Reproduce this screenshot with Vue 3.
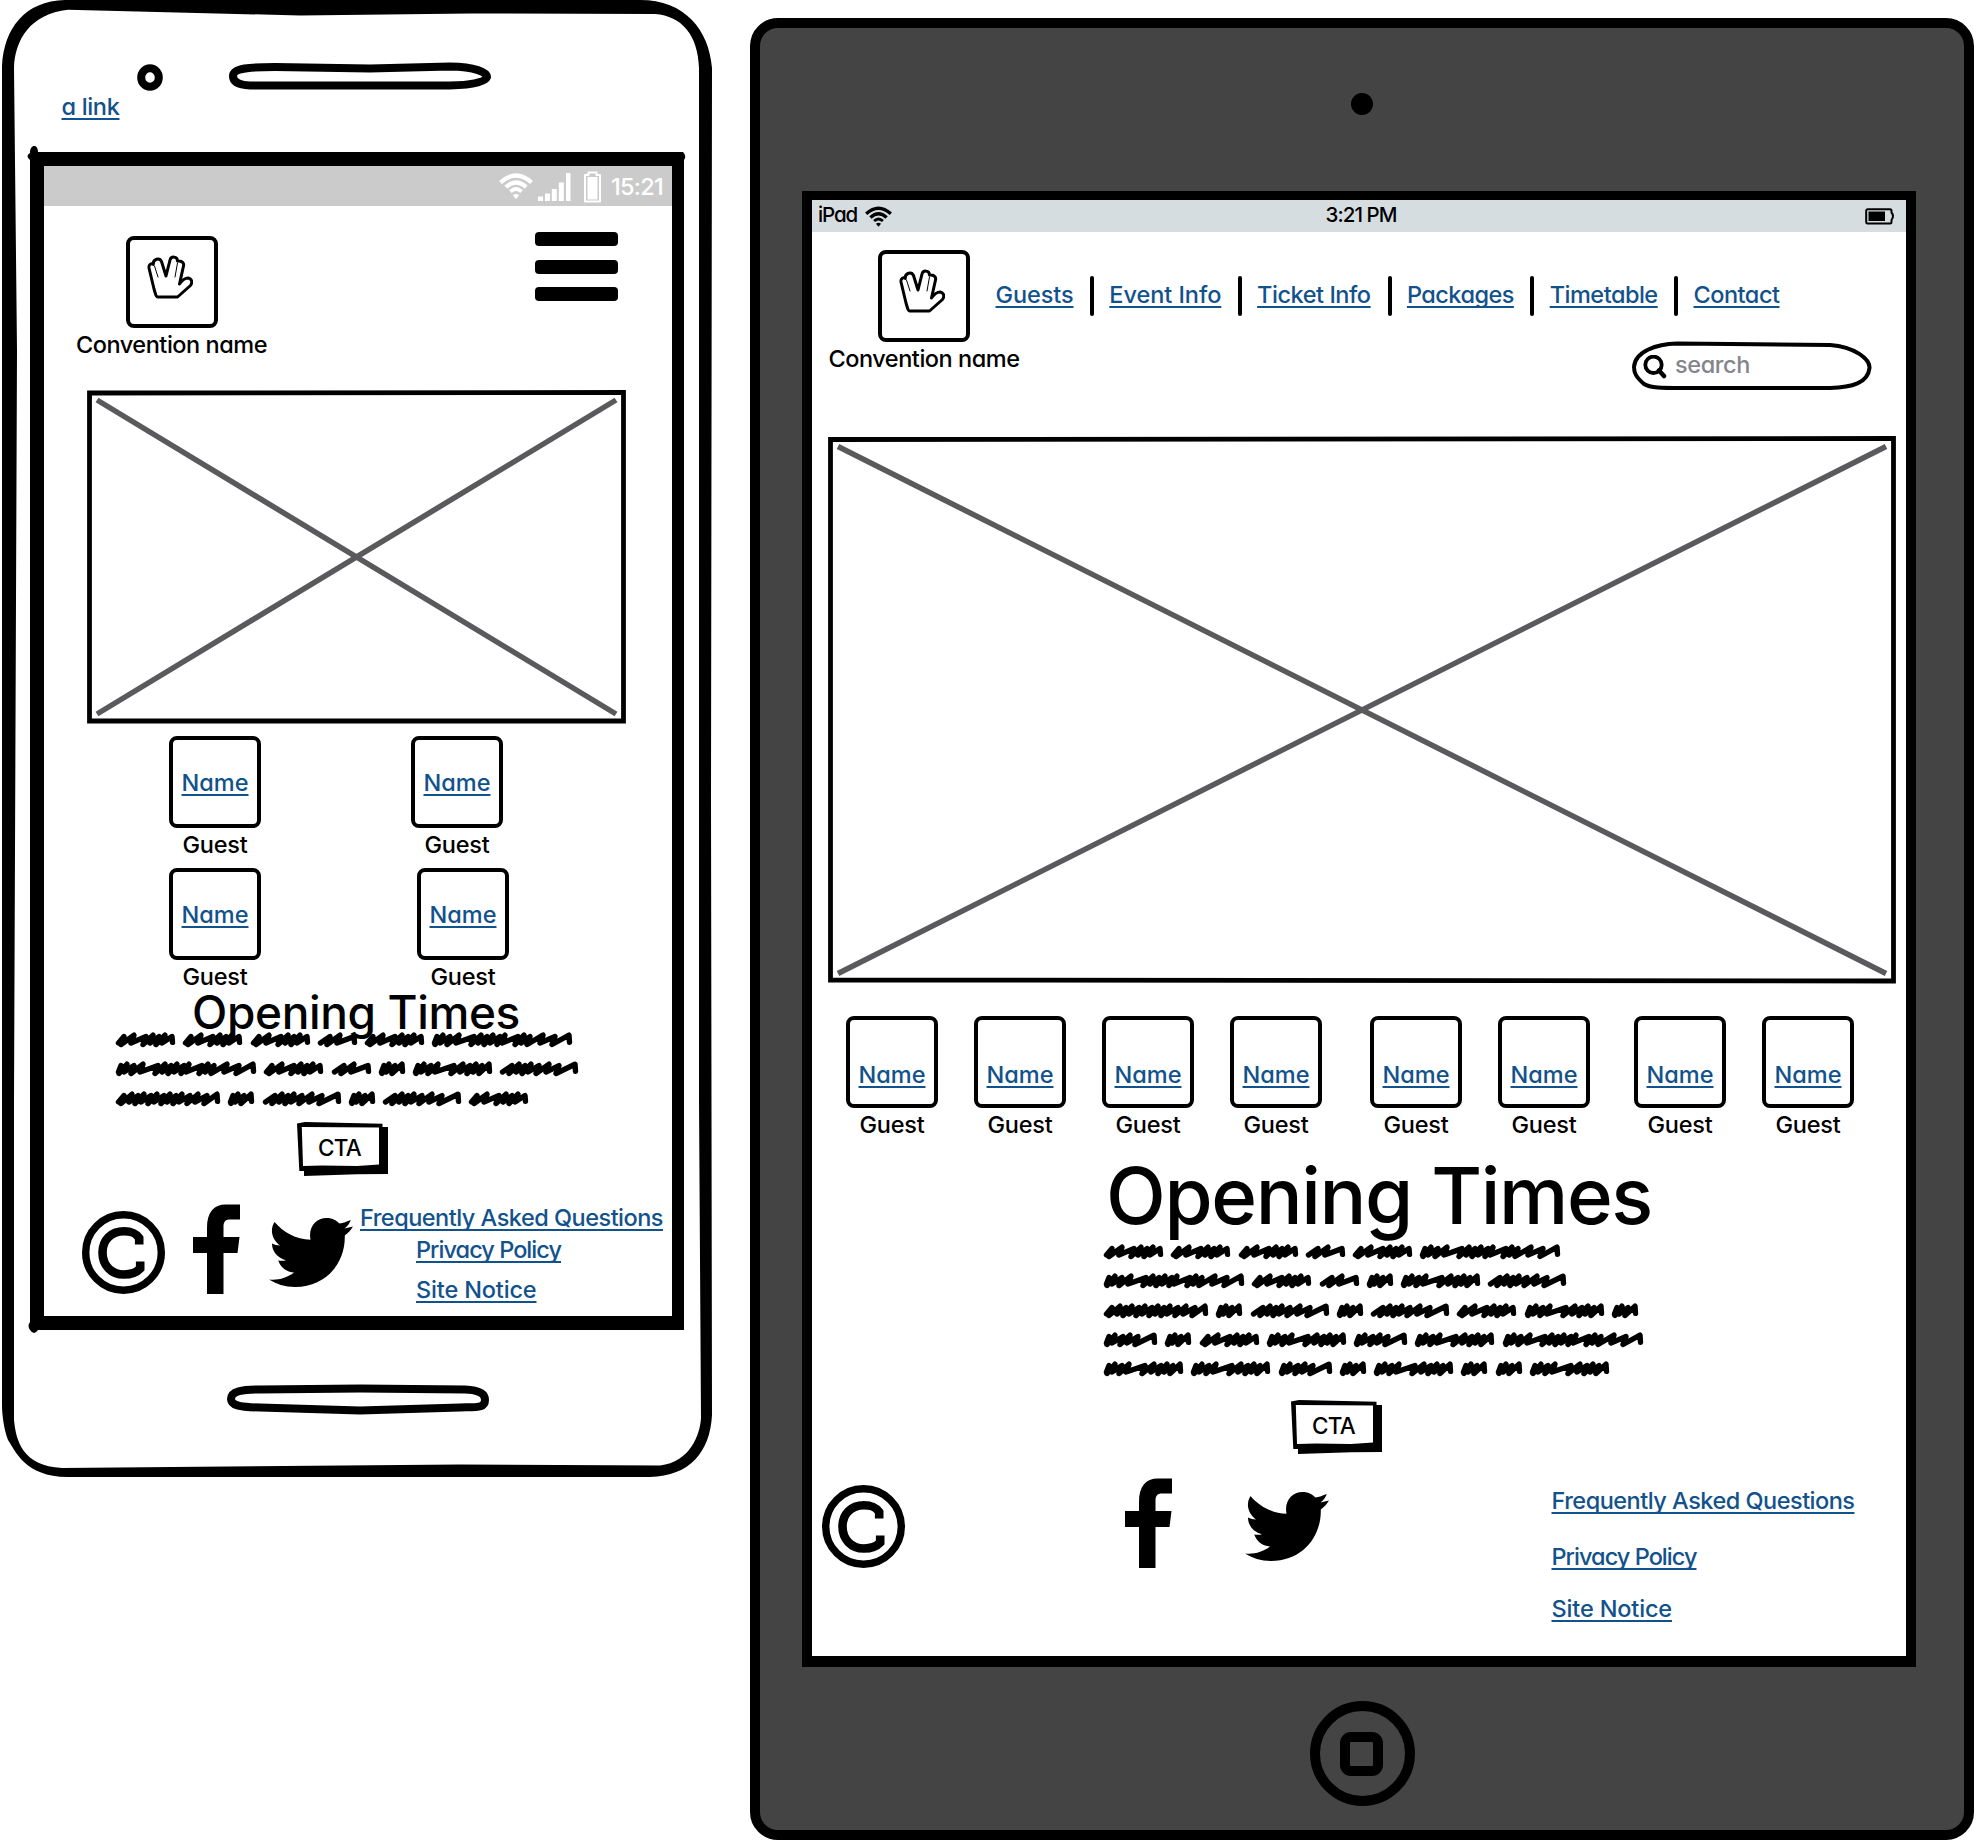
<script setup>
import { h } from 'vue'

// Spreads the letters of a label so that it fills the given width.
const vFit = {
  mounted(el, { value }) {
    const range = document.createRange()
    range.selectNodeContents(el)
    const natural = range.getBoundingClientRect().width
    el.style.letterSpacing = (value - natural) / el.textContent.length + 'px'
  },
}

// Scribbled filler words: width and the x position of every peak.
const words = {
  A: { w: 59, t: [10, 20, 32, 39, 45, 51, 58] },
  B: { w: 39, t: [14, 24, 38] },
  C: { w: 140, t: [7, 13, 20, 29, 44, 51, 57, 63, 70, 75, 88, 94, 100, 113, 125, 139] },
  D: { w: 26, t: [7, 12, 18, 25] },
  E: { w: 79, t: [7, 13, 20, 27, 43, 52, 59, 65, 71, 78] },
  F: { w: 78, t: [14, 21, 27, 33, 41, 51, 61, 77] },
  G: { w: 104, t: [10, 18, 24, 30, 37, 43, 50, 56, 62, 68, 76, 84, 93, 103] },
  H: { w: 53, t: [7, 13, 21, 28, 36, 52] },
}
function scribble(t) {
  let d = `M2.5 11`
  t.forEach((x, i) => {
    const top = i % 2 ? 3.2 : 4.6
    const next = t[i + 1]
    d += ` L${x - 2} ${top}`
    if (next) d += ` L${Math.max(3, x - 5)} ${i % 2 ? 11 : 12.5}`
    else d += ` L${x - 1.5} 10.4`
  })
  return d
}
const Scribbles = (props) =>
  props.rows.map((row) =>
    h('div', { class: 'scribble-row' }, [...row].map((k) =>
      h('svg', { width: words[k].w, height: 16, viewBox: `0 0 ${words[k].w} 16` }, [
        h('path', { d: scribble(words[k].t), fill: 'none', stroke: '#000', 'stroke-width': 5.4, 'stroke-linecap': 'round', 'stroke-linejoin': 'round' }),
      ])
    ))
  )
Scribbles.props = ['rows']

const Wifi = () =>
  h('svg', { viewBox: '0 0 34 26' }, [
    h('g', { fill: 'none', stroke: 'currentColor', 'stroke-width': 4.3 }, [
      h('path', { d: 'M1.5 9.5Q17-4.5 32.5 9.5' }),
      h('path', { d: 'M6.8 14.2Q17 4.8 27.2 14.2' }),
      h('path', { d: 'M11.4 18.6Q17 13.4 22.6 18.6', 'stroke-width': 3.6 }),
    ]),
    h('path', { d: 'M13.8 22.2Q17 19.6 20.2 22.2L17 26Z', fill: 'currentColor' }),
  ])

const Hand = () =>
  h('svg', { width: 46, height: 44, viewBox: '0 0 46 44', fill: 'none', stroke: '#000', 'stroke-linejoin': 'round', 'stroke-linecap': 'round' }, [
    h('path', { 'stroke-width': 3, d: 'M8.5 39L7 34 2 13C1.5 9 4.5 8 6.2 9.5C6 4 12.5 2 14.5 6.5L19 21 23 5C24 1 30.5 1 30.5 6C34 5.500 37.500 7.500 36.500 11L32.500 29C35 25.500 38 23 41 23C44.500 23.500 46 27 43.500 30.500L30.500 42H11C9.500 42 9 41 8.500 39Z' }),
    h('path', { 'stroke-width': 1, d: 'M7.500 11L11 22M30.500 8L28 22' }),
  ])

const CopyrightIcon = () =>
  h('svg', { width: 83, height: 83, viewBox: '0 0 83 83', fill: 'none', stroke: '#000' }, [
    h('circle', { cx: 41.5, cy: 41.5, r: 37.8, 'stroke-width': 7.4 }),
    h('path', { 'stroke-width': 8.6, d: 'M57.200 33.500V27C53 21 48 20.200 42 20.200C29 20.200 20.500 29 20.500 41.500S29 63.500 42 63.500C49 63.500 54 62 58.200 57.500V50.500' }),
  ])
const FacebookIcon = () =>
  h('svg', { width: 47, height: 90, viewBox: '0 0 47 90' }, [
    h('path', { d: 'M14 90V49H0V33H14V24C14 8 21 0 34 0.500H47V15.500H37C32 15.500 30.500 18 30.500 23V33H46.500L44.500 49H30.500V90Z' }),
  ])
const TwitterIcon = () =>
  h('svg', { width: 84, height: 69, viewBox: '0 0 84 69' }, [
    h('path', { d: 'M5.500 4C14 14 27 21.500 41.500 21.800C39 9 47 0 57.500 0C64 0 67.500 2.500 70.500 5.500C74 5 78 3.500 81.800 2C80.500 5.500 78.500 8.500 75.500 10.500L84 8.500C82 12 79 15 75.800 17.500C76.500 44 58 69 26 69C16 69 7 66 0 61.500C9 62.500 18 60 25 54.500C17 54 11.500 49 9.200 42.500C12 43 14.500 43 17 42.300C8.500 40 3 33.500 3 25.500C5.300 26.700 8 27.500 11 27.500C3 21.500 0.500 12 5.500 4Z' }),
  ])
const Cta = () =>
  h('div', { class: 'cta' }, [
    h('svg', { width: 92, height: 55, viewBox: '0 0 92 55' }, [
      h('path', { d: 'M0 1.500L8 0 85.500 1.800V5H91V52L60 52.300 7 54V49H2.300Z' }),
      h('path', { d: 'M4.800 5L82 5.500 82 42.500 60 44 25 43.500 6 44Z', fill: '#fff' }),
    ]),
    h('span', 'CTA'),
  ])

const nav = [
  ['Guests', 78, 16.5], ['Event Info', 112, 16.5], ['Ticket Info', 113.500, 17],
  ['Packages', 107, 16.500], ['Timetable', 108, 16.500], ['Contact', 86, 0],
]
const tabletGuests = [0, 36, 36, 36, 48, 36, 44, 36]
</script>

<template>
  <main class="board">
    <section class="phone">
      <svg class="shell" width="716" height="1480" viewBox="0 0 716 1480">
        <path fill-rule="evenodd" d="M2 66C4 28 25 1 65 0H640C685 0 709 30 712 68L711 800 712 1415C710 1452 690 1476 650 1477H70C25 1478 15 1450 8 1440C4 1430 2 1415 2 1405ZM14 68L17 350 14 1100 14 1420C16 1440 22 1466 62 1468L460 1464.500 660 1465.500C690 1462 700 1435 701 1418L699 1100V68C698 35 682 16 655 14L470 13.500 300 15.500 68 9.800C30 14 15 40 14 68Z" />
        <path d="M30 153C30 144 38 144 38 152H683Q687 156 684 160V1330H38Q34 1336 30 1330Q27 1326 30 1322V160Q25 156 30 153ZM44 166V1316H672V166Z" fill-rule="evenodd" />
        <ellipse cx="150" cy="77.500" rx="8.800" ry="9.300" fill="none" stroke="#000" stroke-width="8" />
        <path d="M233 76C233 68 250 67 275 67L370 68.500 450 66.500C475 67 487 72 487 77C485 83 468 85 450 85.500H250C238 85 233 82 233 76Z" fill="none" stroke="#000" stroke-width="8" />
        <path d="M231 1399C231 1391 242 1389.500 260 1389.500L360 1388.500 465 1389.500C480 1390 485 1394 485 1400C485 1408 478 1407 460 1407.500L360 1410.500 260 1407.500C238 1407 231 1405 231 1399Z" fill="none" stroke="#000" stroke-width="8" />
      </svg>

      <div class="phone-top"><a v-fit="58" class="link">a link</a></div>

      <div class="phone-screen">
        <div class="phone-status">
          <Wifi class="wifi" />
          <svg class="bars" width="33" height="28" viewBox="0 0 33 28" fill="#fff">
            <path d="M0 23.500h5V28H0zM7 20.500h5V28H7zM13.800 16h5v12h-5zM20.800 9.500h5V28h-5zM28 0h4.500v28H28z" />
          </svg>
          <svg class="battery" width="17" height="32" viewBox="0 0 17 32">
            <path d="M1 4h3.500V1.500h8V4H16v26.500H1z" fill="none" stroke="#fff" stroke-width="2" stroke-linejoin="round" />
            <path d="M3.500 6h10v22.500h-10z" fill="#fff" />
          </svg>
          <span v-fit="52">15:21</span>
        </div>

        <header class="phone-header">
          <div class="logo">
            <div class="box"><Hand class="hand" /></div>
            <span v-fit="191">Convention name</span>
          </div>
          <div class="burger"><i /><i /><i /></div>
        </header>

        <svg class="hero-small" width="539" height="334" viewBox="0 0 539 334" fill="none">
          <path d="M10 10L529 324M529 10L10 324" stroke="#5a5a5c" stroke-width="5.500" />
          <path d="M2.500 3L536.500 2.500V331L2.500 331Z" stroke="#000" stroke-width="4.800" />
        </svg>

        <div class="phone-guests">
          <div v-for="(gap, i) in [150, 156]" :key="i" class="pair" :style="{ gap: gap + 'px' }">
            <div v-for="n in 2" :key="n" class="guest">
              <div class="box"><a v-fit="67" class="link">Name</a></div>
              <span v-fit="65">Guest</span>
            </div>
          </div>
        </div>

        <h2 class="title-small"><span v-fit="328">Opening Times</span></h2>
        <div class="text-small"><Scribbles :rows="['AAABAC', 'CABDEF', 'GDFDFA']" /></div>
        <div class="cta-small"><Cta /></div>

        <footer class="phone-footer">
          <CopyrightIcon class="copy" />
          <FacebookIcon class="fb" />
          <TwitterIcon class="tw" />
          <nav>
            <a v-fit="303" class="link faq">Frequently Asked Questions</a>
            <a v-fit="145" class="link policy">Privacy Policy</a>
            <a v-fit="120.500" class="link">Site Notice</a>
          </nav>
        </footer>
      </div>
    </section>

    <section class="tablet">
      <div class="camera" />
      <div class="tablet-screen">
        <div class="tablet-status">
          <div class="side"><span v-fit="39">iPad</span><Wifi class="wifi" /></div>
          <span v-fit="71">3:21 PM</span>
          <div class="side end">
            <svg width="30" height="17" viewBox="0 0 30 17">
              <path d="M2.500 1.200H25Q26.500 1.200 26.500 3V4.500Q29.500 8 26.500 12V14Q26.500 15.500 25 15.500H2.500Q1.200 15.500 1.200 14V2.700Q1.200 1.200 2.500 1.200Z" fill="none" stroke="#000" stroke-width="2" />
              <path d="M3.500 3.500H20V13H3.500z" />
            </svg>
          </div>
        </div>

        <header class="tablet-header">
          <div class="logo">
            <div class="box"><Hand class="hand" /></div>
            <span v-fit="191">Convention name</span>
          </div>
          <div class="tablet-tools">
            <nav class="menu">
              <template v-for="([label, width, gap], i) in nav" :key="label">
                <a v-fit="width" class="link">{{ label }}</a>
                <i v-if="i < 5" class="divider" :style="{ marginLeft: gap + 'px' }" />
              </template>
            </nav>
            <div class="search">
              <svg class="pill" width="242" height="50" viewBox="0 0 242 50">
                <path d="M4 26C5 10 27 3 47 2.500L100 3 200 4C225 6 240 18 239.500 27C238 42 222 46.500 200 47H52C32 47 20 47 14 43C6 36 4 32 4 26Z" fill="#fff" stroke="#000" stroke-width="4" />
              </svg>
              <svg class="lens" width="24" height="24" viewBox="0 0 24 24" fill="none" stroke="#000" stroke-linecap="round">
                <circle cx="10.500" cy="9.800" r="8.200" stroke-width="3.800" />
                <path d="M16 15.500L21 21" stroke-width="4.500" />
              </svg>
              <span v-fit="75">search</span>
            </div>
          </div>
        </header>

        <svg class="hero-large" width="1068" height="548" viewBox="0 0 1068 548" fill="none">
          <path d="M10 10.500L1058 537.500M1058 10.500L10 537.500" stroke="#5a5a5c" stroke-width="5.500" />
          <path d="M2.500 3.500L1065.500 2.500V545L2.500 544Z" stroke="#000" stroke-width="4.800" />
        </svg>

        <div class="tablet-guests">
          <div v-for="(gap, i) in tabletGuests" :key="i" class="guest" :style="{ marginLeft: gap + 'px' }">
            <div class="box"><a v-fit="67" class="link">Name</a></div>
            <span v-fit="65">Guest</span>
          </div>
        </div>

        <h1 class="title-large"><span v-fit="546">Opening Times</span></h1>
        <div class="text-large"><Scribbles :rows="['AAABAC', 'CABDEF', 'GDFDFAED', 'HDAEHEC', 'EEHDEDDE']" /></div>
        <div class="cta-large"><Cta /></div>

        <footer class="tablet-footer">
          <CopyrightIcon class="copy" />
          <FacebookIcon class="fb" />
          <TwitterIcon class="tw" />
          <nav>
            <a v-fit="303" class="link">Frequently Asked Questions</a>
            <a v-fit="145" class="link policy">Privacy Policy</a>
            <a v-fit="120.500" class="link">Site Notice</a>
          </nav>
        </footer>
      </div>
      <div class="home"><i /></div>
    </section>
  </main>
</template>

<style>
body { margin: 0; background: #fff; }
.scribble-row { display: flex; gap: 8.3px; height: 29.3px; }
.scribble-row svg { display: block; flex: none; overflow: visible; }
.cta { position: relative; width: 92px; height: 55px; }
.cta svg { display: block; }
.cta span { position: absolute; left: 21px; top: 12px; font-size: 22.5px; line-height: 28px; letter-spacing: -0.8px; }
</style>

<style scoped>
.board {
  display: flex;
  width: 1978px;
  height: 1844px;
  overflow: hidden;
  color: #000;
  font-family: Inter, "Liberation Sans", sans-serif;
  font-size: 23.5px;
  font-weight: 450;
  line-height: 28px;
  font-feature-settings: "cv11";
  white-space: nowrap;
}
.board * { box-sizing: border-box; }
.board svg { display: block; flex: none; }
.link {
  color: #12528c;
  text-decoration: underline;
  text-decoration-thickness: 2px;
  text-underline-offset: 3px;
  text-decoration-skip-ink: none;
}
.box {
  display: flex;
  width: 92px;
  height: 92px;
  border: 4px solid #000;
  border-radius: 8px;
}
.logo, .guest { display: flex; flex-direction: column; align-items: center; }
.logo > span, .guest > span { margin-top: 3px; }
.guest > span { height: 27px; line-height: 27px; }
.hand { margin: 15px 0 0 17px; }

/* phone */
.phone { position: relative; width: 750px; height: 1480px; flex: none; }
.shell { position: absolute; left: 0; top: 0; }
.phone-top { height: 166px; padding: 93px 0 0 61.5px; position: relative; }
.phone-screen { position: relative; margin-left: 44px; width: 628px; height: 1150px; background: #fff; }
.phone-status {
  display: flex;
  align-items: flex-start;
  justify-content: flex-end;
  height: 40px;
  padding-right: 9px;
  background: #cbcbcb;
  color: #fff;
}
.phone-status .wifi { width: 34px; height: 26px; margin: 6.500px 5px 0 0; }
.bars { margin: 7px 13px 0 0; }
.battery { margin: 4.500px 10px 0 0; }
.phone-status span { margin-top: 6.500px; }
.phone-header { display: flex; justify-content: space-between; height: 184px; padding: 30px 54px 0 32px; }
.phone-header .logo { width: 191px; }
.burger { display: flex; flex-direction: column; gap: 13.500px; margin-top: -4px; }
.burger i { width: 83px; height: 14px; background: #000; border-radius: 4px; }
.hero-small { margin-left: 43px; }
.phone-guests { display: flex; flex-direction: column; gap: 10px; padding: 12px 0 0 125px; }
.pair { display: flex; }
.guest { width: 92px; }
.phone-guests .link { margin: 29px auto 0; }
.title-small { margin: 2px 0 0 148px; height: 40px; font-size: 46px; line-height: 41px; font-weight: 500; }
.text-small { margin-left: 72px; height: 90px; }
.cta-small { margin-left: 253px; }
.phone-footer { display: flex; padding: 27px 0 0 38px; }
.phone-footer .copy { margin-top: 7px; }
.phone-footer .fb { margin-left: 28px; }
.phone-footer .tw { margin: 14px 0 0 29px; }
.phone-footer nav { display: flex; flex-direction: column; align-items: flex-start; margin-left: 7px; }
.phone-footer nav a { margin-left: 56px; }
.phone-footer .faq { margin-left: 0; margin-bottom: 4px; }
.phone-footer .policy { margin-bottom: 12px; }

/* tablet */
.tablet {
  display: flex;
  flex-direction: column;
  align-items: center;
  width: 1224px;
  height: 1822px;
  margin-top: 18px;
  flex: none;
  background: #444;
  border: 10px solid #000;
  border-radius: 28px;
}
.camera { width: 22px; height: 22px; margin-top: 65px; background: #000; border-radius: 50%; }
.tablet-screen {
  width: 1114px;
  height: 1476px;
  margin-top: 76px;
  margin-left: -6px;
  border: solid #000;
  border-width: 9px 10px 11px;
  background: #fff;
}
.tablet-status { display: flex; align-items: center; height: 32px; padding: 0 11px 0 6px; font-size: 20.5px; background: #d6dde0; }
.tablet-status span { margin-top: -2px; }
.tablet-status > span { margin-left: 9px; }
.side { display: flex; flex: 1; align-items: center; gap: 8px; }
.side.end { justify-content: flex-end; }
.side .wifi { width: 27px; height: 21px; }
.tablet-header { display: flex; height: 204px; padding: 18px 0 0 16.5px; }
.tablet-header .logo { width: 191px; flex: none; }
.tablet-tools { flex: 1; }
.menu { display: flex; align-items: center; height: 40px; margin: 26px 0 0 -24px; }
.menu .link { margin-top: -2px; }
.divider { width: 4px; height: 40px; margin-right: 15.300px; background: #000; border-radius: 2px; }
.search { position: relative; display: flex; width: 242px; height: 50px; margin: 25px 0 0 610.5px; padding: 10px 0 0 45px; color: #85858c; }
.pill { position: absolute; left: 0; top: 0; }
.lens { position: absolute; left: 13px; top: 14px; }
.search span { position: relative; }
.hero-large { margin-left: 16px; }
.tablet-guests { display: flex; margin: 32px 0 0 34px; }
.tablet-guests .guest { flex: none; }
.tablet-guests .link { margin: 41px auto 0; }
.title-large { margin: 20px 0 0 294px; height: 75px; font-size: 78px; line-height: 75px; font-weight: 500; }
.text-large { margin: 0 0 0 292px; padding-top: 11px; height: 167px; }
.cta-large { margin: 0 0 0 479px; }
.tablet-footer { display: flex; padding: 23px 0 0 10px; }
.tablet-footer .copy { margin-top: 7px; }
.tablet-footer .fb { margin-left: 220px; }
.tablet-footer .tw { margin: 14px 0 0 73px; }
.tablet-footer nav { display: flex; flex-direction: column; align-items: flex-start; margin: 9px 0 0 222.5px; }
.tablet-footer nav a { margin-bottom: 28px; }
.tablet-footer nav .policy { margin-bottom: 24px; }
.home {
  display: flex;
  align-items: center;
  justify-content: center;
  width: 105px;
  height: 105px;
  margin-top: 34px;
  border: 10px solid #000;
  border-radius: 50%;
}
.home i { width: 43px; height: 44px; margin-left: -1px; border: 10px solid #000; border-radius: 11px; }
</style>
